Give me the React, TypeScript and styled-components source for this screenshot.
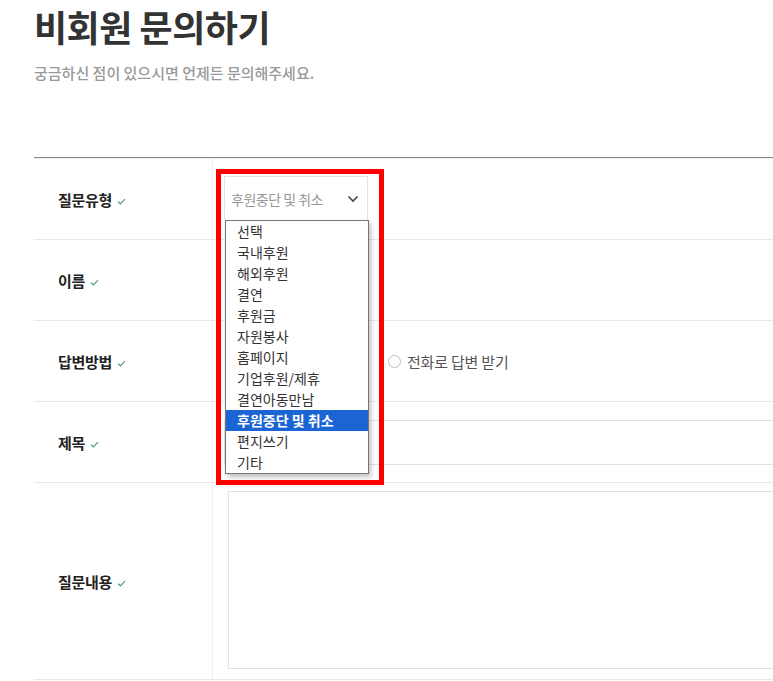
import styled, { createGlobalStyle } from 'styled-components'

const GlobalStyle = createGlobalStyle`
  body {
    margin: 0;
    background: #fff;
    font-family: "Noto Sans CJK KR", "Noto Sans", sans-serif;
    color: #333;
    overflow: hidden;
  }
`

const OPTIONS = [
  '선택',
  '국내후원',
  '해외후원',
  '결연',
  '후원금',
  '자원봉사',
  '홈페이지',
  '기업후원/제휴',
  '결연아동만남',
  '후원중단 및 취소',
  '편지쓰기',
  '기타',
]
const SELECTED = '후원중단 및 취소'

function Check() {
  return (
    <CheckIcon width="9" height="7" viewBox="0 0 9 7">
      <path d="M1 3.6 L3.4 5.8 L8 1.2" fill="none" stroke="#4f9a72" strokeWidth="1.2" />
    </CheckIcon>
  )
}

function Chevron() {
  return (
    <ChevronIcon width="12" height="8" viewBox="0 0 12 8">
      <path d="M1.5 1.5 L6 6 L10.5 1.5" fill="none" stroke="#444" strokeWidth="1.6" />
    </ChevronIcon>
  )
}

export default function App() {
  return (
    <Page>
      <GlobalStyle />
      <Header>
        <Title>비회원 문의하기</Title>
        <Subtitle>궁금하신 점이 있으시면 언제든 문의해주세요.</Subtitle>
      </Header>
      <Form>
        <Row>
          <Label>
            질문유형 <Check />
          </Label>
          <Cell>
            <SelectWrap>
              <SelectBox>
                <SelectText>{SELECTED}</SelectText>
                <Chevron />
              </SelectBox>
              <Dropdown>
                {OPTIONS.map((opt) => (
                  <Option key={opt} active={opt === SELECTED}>
                    {opt}
                  </Option>
                ))}
              </Dropdown>
              <Highlight />
            </SelectWrap>
          </Cell>
        </Row>
        <Row>
          <Label>
            이름 <Check />
          </Label>
          <Cell />
        </Row>
        <Row>
          <Label>
            답변방법 <Check />
          </Label>
          <Cell>
            <RadioGroup>
              <RadioItem>
                <Radio />
                전화로 답변 받기
              </RadioItem>
            </RadioGroup>
          </Cell>
        </Row>
        <Row>
          <Label>
            제목 <Check />
          </Label>
          <Cell>
            <TextInput />
          </Cell>
        </Row>
        <Row tall>
          <Label>
            질문내용 <Check />
          </Label>
          <Cell>
            <TextArea />
          </Cell>
        </Row>
      </Form>
    </Page>
  )
}

const Page = styled.div`
  padding-left: 34px;
  width: 900px;
`
const Header = styled.header`
  padding-top: 3px;
  height: 157px;
  box-sizing: border-box;
`
const Title = styled.h1`
  margin: 0;
  font-size: 36px;
  line-height: 46px;
  font-weight: 700;
  letter-spacing: -0.5px;
  color: #333;
`
const Subtitle = styled.p`
  margin: 14px 0 0;
  font-size: 15px;
  line-height: 20px;
  font-weight: 500;
  letter-spacing: 0;
  color: #999;
`
const Form = styled.div`
  border-top: 1px solid #888;
  &::before {
    content: '';
    display: block;
    height: 1px;
    background: #eee;
  }
`
interface RowProps {
  readonly tall?: boolean
}
const Row = styled.div<RowProps>`
  display: grid;
  grid-template-columns: 179px 1fr;
  height: ${(p) => (p.tall ? '196px' : '80px')};
  border-bottom: 1px solid #e8e8e8;
`
const Label = styled.div`
  display: flex;
  align-items: center;
  gap: 5px;
  padding-left: 24px;
  border-right: 1px solid #eee;
  font-size: 15px;
  font-weight: 700;
  color: #222;
  letter-spacing: -0.3px;
`
const CheckIcon = styled.svg`
  margin-top: 5px;
`
const Cell = styled.div`
  display: flex;
  align-items: center;
  padding-left: 11px;
`
const SelectWrap = styled.div`
  position: relative;
  height: 46px;
`
const SelectBox = styled.div`
  box-sizing: border-box;
  width: 144px;
  height: 44px;
  display: flex;
  align-items: center;
  justify-content: space-between;
  padding: 0 8px 0 6px;
  border: 1px solid #e2e2e2;
  border-bottom: none;
`
const SelectText = styled.span`
  font-size: 14px;
  color: #999;
  letter-spacing: -0.5px;
`
const ChevronIcon = styled.svg`
  display: block;
`
const Dropdown = styled.ul`
  position: absolute;
  top: 44px;
  left: 1px;
  z-index: 2;
  box-sizing: border-box;
  width: 144px;
  margin: 0;
  padding: 0;
  list-style: none;
  background: #fff;
  border: 1px solid #767676;
  box-shadow: 2px 3px 5px rgba(0, 0, 0, 0.25);
`
interface OptionProps {
  readonly active: boolean
}
const Option = styled.li<OptionProps>`
  height: 21px;
  line-height: 21px;
  padding-left: 11px;
  font-size: 14px;
  color: ${(p) => (p.active ? '#fff' : '#333')};
  font-weight: ${(p) => (p.active ? 700 : 400)};
  background: ${(p) => (p.active ? '#1a64d4' : 'transparent')};
`
const Highlight = styled.div`
  position: absolute;
  left: -8px;
  top: -7px;
  z-index: 3;
  width: 168px;
  height: 316px;
  box-sizing: border-box;
  border: 5px solid #ff0000;
  pointer-events: none;
`
const RadioGroup = styled.div`
  display: flex;
  padding-left: 164px;
`
const RadioItem = styled.label`
  display: flex;
  align-items: center;
  gap: 6px;
  font-size: 15px;
  color: #555;
  letter-spacing: -0.2px;
`
const Radio = styled.span`
  width: 13px;
  height: 13px;
  border: 1px solid #bbb;
  border-radius: 50%;
  box-sizing: border-box;
`
const TextInput = styled.div`
  flex: 1;
  height: 43px;
  border: 1px solid #e2e2e2;
  border-right: none;
`
const TextArea = styled.div`
  align-self: flex-start;
  flex: 1;
  margin: 8px 0 0 4px;
  height: 176px;
  border: 1px solid #e2e2e2;
  border-right: none;
`
